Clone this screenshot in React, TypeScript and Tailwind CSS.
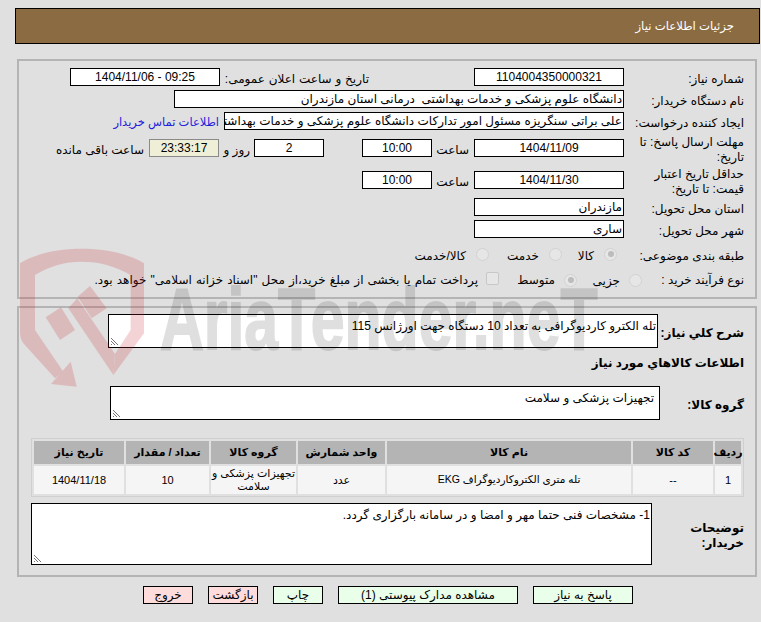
const box = "h-[18px] bg-white border border-black text-[12px] leading-[16px] shrink-0 overflow-hidden whitespace-pre";
const cell = "bg-[#f5f5f5] flex items-center justify-center";

function Radio({ checked }: { checked?: boolean }) {
  return (
    <span className="w-[13px] h-[13px] rounded-full bg-[#e6e6e6] border border-[#d2d2d2] flex items-center justify-center shrink-0">
      {checked && <span className="w-[6px] h-[6px] rounded-full bg-[#bcbcbc]" />}
    </span>
  );
}

function Grip() {
  return (
    <svg className="absolute left-[1px] bottom-[1px]" width="9" height="9" viewBox="0 0 9 9" stroke="#777" strokeWidth="1">
      <path d="M1 1l7 7M1 4l4 4M1 7l1 1" />
    </svg>
  );
}

// faded logo, it lies over the form
function Watermark() {
  return (
    <div dir="ltr" className="absolute left-0 top-[230px] w-[761px] h-[170px] pointer-events-none select-none">
      <svg className="absolute left-0 top-0 opacity-20" width="150" height="160" viewBox="0 0 450 480" fill="#c82832">
        <path d="M60 100C150 42 340 42 432 100V310L340 435 345 372 392 300V135C300 82 190 82 105 135V300L190 425 165 445 70 340C62 328 60 318 60 300Z" />
        <path d="M232 205L345 372 340 435 205 235Z" />
        <path d="M212 395L230 470 153 462Z" />
        <path d="M137 262L183 232 225 300 180 330Z" />
        <path d="M233 200L270 168 320 235 275 265Z" />
      </svg>
      <div className="absolute left-[160px] top-[34px] opacity-[0.12] text-black text-[88px] leading-[110px] font-bold whitespace-nowrap font-['Liberation_Sans',sans-serif] origin-left scale-x-[0.69] [-webkit-text-stroke:2px_#000]">AriaTender.neT</div>
    </div>
  );
}

export default function App() {
  return (
    <div dir="rtl" className="relative w-[761px] h-[622px] bg-[#e0e0e0] overflow-hidden text-[12px] text-black font-['Liberation_Sans','DejaVu_Sans',sans-serif]">
      <div className="relative">
        <div className="ml-[15px] mr-[1px] mt-[8px] h-[36px] bg-[#8b6b41] border border-black text-white text-[11.7px] flex items-center pr-[25px]">جزئیات اطلاعات نیاز</div>

        <div className="ml-[17px] mr-[4px] mt-[15px] h-[240px] border-2 border-[#b4b4b4] pr-[11px] pt-[7px]">
          <div className="flex h-[18px]">
            <div className="w-[120px] pt-[2px]">شماره نیاز:</div>
            <div className={`${box} w-[150px] text-center`}>1104004350000321</div>
            <div className="w-[105px]" />
            <div className="w-[149px] pt-[2px] whitespace-nowrap [word-spacing:0.5px]">تاریخ و ساعت اعلان عمومی:</div>
            <div dir="ltr" className={`${box} w-[150px] text-center`}>1404/11/06 - 09:25</div>
          </div>
          <div className="flex mt-[4px] h-[18px]">
            <div className="w-[120px] pt-[2px]">نام دستگاه خریدار:</div>
            <div className={`${box} w-[450px] pr-[1px]`}>دانشگاه علوم پزشکی و خدمات بهداشتی  درمانی استان مازندران</div>
          </div>
          <div className="flex mt-[4px] h-[18px]">
            <div className="w-[120px] pt-[2px] whitespace-nowrap">ایجاد کننده درخواست:</div>
            <div className={`${box} w-[400px] pr-[1px]`}>علی براتی سنگریزه مسئول امور تدارکات دانشگاه علوم پزشکی و خدمات بهداشتی</div>
            <div className="mr-[5px] pt-[2px] text-[#2222dd] whitespace-nowrap text-[11.5px]">اطلاعات تماس خریدار</div>
          </div>
          <div className="flex mt-[9px] h-[18px]">
            <div className="w-[120px] pl-[10px] leading-[15px] -mt-[4px]">مهلت ارسال پاسخ: تا تاریخ:</div>
            <div className={`${box} w-[150px] text-center`}>1404/11/09</div>
            <div className="w-[42px] pr-[5px] pt-[2px]">ساعت</div>
            <div className={`${box} w-[70px] text-center`}>10:00</div>
            <div className="w-[38px]" />
            <div className={`${box} w-[70px] text-center`}>2</div>
            <div className="w-[35px] pr-[4px] pt-[2px] whitespace-nowrap">روز و</div>
            <div className={`${box} w-[70px] text-center !bg-[#efefd8] !border-[#8a8a8a]`}>23:33:17</div>
            <div className="pr-[5px] pt-[2px] whitespace-nowrap">ساعت باقی مانده</div>
          </div>
          <div className="flex mt-[14px] h-[18px]">
            <div className="w-[120px] pl-[10px] leading-[15px] -mt-[4px]">حداقل تاریخ اعتبار قیمت: تا تاریخ:</div>
            <div className={`${box} w-[150px] text-center`}>1404/11/30</div>
            <div className="w-[42px] pr-[5px] pt-[2px]">ساعت</div>
            <div className={`${box} w-[70px] text-center`}>10:00</div>
          </div>
          <div className="flex mt-[9px] h-[18px]">
            <div className="w-[120px] pt-[2px]">استان محل تحویل:</div>
            <div className={`${box} w-[150px] pr-[1px]`}>مازندران</div>
          </div>
          <div className="flex mt-[4px] h-[18px]">
            <div className="w-[120px] pt-[2px]">شهر محل تحویل:</div>
            <div className={`${box} w-[150px] pr-[1px]`}>ساری</div>
          </div>
          <div className="flex items-center mt-[6px] h-[20px]">
            <div className="w-[127px] pt-[3px] whitespace-nowrap">طبقه بندی موضوعی:</div>
            <Radio checked />
            <div className="w-[42px] pr-[10px] pt-[3px]">کالا</div>
            <Radio />
            <div className="w-[60px] pr-[10px] pt-[3px]">خدمت</div>
            <Radio />
            <div className="pr-[10px] pt-[3px]">کالا/خدمت</div>
          </div>
          <div className="flex items-center mt-[6px] h-[20px]">
            <div className="w-[102px] whitespace-nowrap">نوع فرآیند خرید :</div>
            <Radio />
            <div className="w-[52px] pr-[9px] pt-[2px]">جزیی</div>
            <Radio checked />
            <div className="w-[65px] pr-[9px]">متوسط</div>
            <span className="w-[13px] h-[13px] -mt-[3px] bg-[#e6e6e6] border border-[#c8c8c8] rounded-[2px] shrink-0" />
            <div className="pr-[8px] whitespace-nowrap [word-spacing:0.8px]">پرداخت تمام یا بخشی از مبلغ خرید،از محل "اسناد خزانه اسلامی" خواهد بود.</div>
          </div>
        </div>

        <div className="ml-[17px] mr-[4px] mt-[7px] h-[271px] border-2 border-[#b4b4b4] pr-[11px] pt-[6px]">
          <div className="flex h-[34px]">
            <div className="w-[86px] pt-[10px] font-bold whitespace-nowrap">شرح کلي نياز:</div>
            <div className="relative bg-white border border-black w-[550px] h-[34px] pr-[1px] leading-[16px] pt-[3px]">تله الکترو کاردیوگرافی به تعداد 10 دستگاه جهت اورژانس 115<Grip /></div>
          </div>
          <div className="font-bold mt-[6px] h-[16px] whitespace-nowrap">اطلاعات كالاهاي مورد نياز</div>
          <div className="flex mt-[16px] h-[34px]">
            <div className="w-[84px] pt-[10px] font-bold">گروه کالا:</div>
            <div className="relative bg-white border border-black w-[550px] h-[34px] pr-[5px] pt-[3px] leading-[16px]">تجهیزات پزشکی و سلامت<Grip /></div>
          </div>
          <div className="w-[713px] mt-[18px] h-[59px] border border-[#cfcfcf] p-[2px]">
            <div className="grid grid-cols-[26px_80px_244px_87px_85px_83px_90px] grid-rows-[23px_28px] gap-[2px] text-[11px] text-center h-[53px]">
              {["ردیف", "کد کالا", "نام کالا", "واحد شمارش", "گروه کالا", "تعداد / مقدار", "تاریخ نیاز"].map((h) => (
                <div key={h} className="bg-[#b4b4b4] font-bold flex items-center justify-center whitespace-nowrap">{h}</div>
              ))}
              <div className={cell}>1</div>
              <div className={cell}>--</div>
              <div className={`${cell} text-[10.5px]`}>تله متری الکتروکاردیوگراف EKG</div>
              <div className={cell}>عدد</div>
              <div className={`${cell} leading-[13px]`}>تجهیزات پزشکی و سلامت</div>
              <div className={cell}>10</div>
              <div className={cell}>1404/11/18</div>
            </div>
          </div>
          <div className="flex mt-[6px]">
            <div className="w-[92px] pt-[18px] font-bold leading-[15px]">توضیحات خریدار:</div>
            <div className="relative bg-white border border-black w-[621px] h-[62px] pr-[1px] pt-[3px] leading-[16px]">1- مشخصات فنی حتما مهر و امضا و در سامانه بارگزاری گردد.<Grip /></div>
          </div>
        </div>

        <div className="flex mt-[9px] mr-[128px] gap-[15px]">
          <div className="w-[100px] h-[18px] border border-black text-center leading-[16px] bg-[#eaffea]">پاسخ به نیاز</div>
          <div className="w-[180px] h-[18px] border border-black text-center leading-[16px] bg-[#eaffea]">مشاهده مدارک پیوستی (1)</div>
          <div className="w-[50px] h-[18px] border border-black text-center leading-[16px] bg-[#eaffea]">چاپ</div>
          <div className="w-[50px] h-[18px] border border-black text-center leading-[16px] bg-[#ffdcdc]">بازگشت</div>
          <div className="w-[50px] h-[18px] border border-black text-center leading-[16px] bg-[#ffdcdc]">خروج</div>
        </div>
      </div>
      <Watermark />
    </div>
  );
}
